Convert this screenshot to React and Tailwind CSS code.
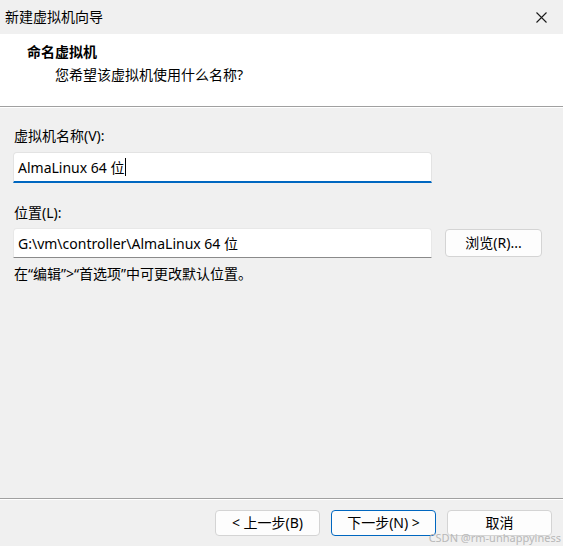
import React from 'react';

const FONT = { fontFamily: '"Noto Sans", "Noto Sans CJK SC", sans-serif' };

function CloseIcon() {
  return (
    <svg width="11" height="11" viewBox="0 0 11 11" fill="none">
      <path d="M0.5 0.5L10.5 10.5M10.5 0.5L0.5 10.5" stroke="#1a1a1a" strokeWidth="1.1" />
    </svg>
  );
}

function WizardButton({ children, primary }) {
  return (
    <button
      type="button"
      className={`h-[26px] w-[105px] rounded-[4px] border bg-[#fdfdfd] text-[14px] leading-none text-black ${
        primary ? 'border-[#0067c0]' : 'border-[#d4d4d4]'
      }`}
    >
      {children}
    </button>
  );
}

export default function App() {
  return (
    <div className="relative flex h-[546px] w-[563px] flex-col overflow-hidden bg-[#f0f0f0] text-black" style={FONT}>
      <div className="flex h-[34px] shrink-0 items-center justify-between pl-[5px] pr-[16px]">
        <span className="text-[14px] leading-none">新建虚拟机向导</span>
        <CloseIcon />
      </div>

      <div className="h-[72px] shrink-0 bg-white pt-[8px]">
        <p className="pl-[27px] text-[14px] font-bold leading-[20px]">命名虚拟机</p>
        <p className="mt-[3px] pl-[55px] text-[14px] leading-[20px]">您希望该虚拟机使用什么名称?</p>
      </div>
      <div className="h-px shrink-0 bg-[#a0a0a0]" />
      <div className="h-px shrink-0 bg-white" />

      <div className="flex flex-1 flex-col px-[13px] pt-[18px]">
        <label className="pl-px text-[14px] leading-[20px]">虚拟机名称(V):</label>
        <div className="mt-[6px] flex h-[31px] w-[419px] items-center rounded-t-[4px] border-x border-t border-b-2 border-[#e3e3e3] border-b-[#0067c0] bg-white pl-[4px] text-[14px]">
          <span>AlmaLinux 64 位</span>
          <span className="ml-px h-[18px] w-px bg-black" />
        </div>

        <label className="mt-[20px] pl-px text-[14px] leading-[20px]">位置(L):</label>
        <div className="mt-[5px] flex items-center gap-[13px]">
          <div className="flex h-[30px] w-[419px] items-center rounded-t-[4px] border-x border-t border-[#e8e8e8] border-b border-b-[#8a8a8a] bg-white pl-[4px] text-[14px]">
            G:\vm\controller\AlmaLinux 64 位
          </div>
          <button
            type="button"
            className="h-[28px] w-[97px] rounded-[4px] border border-[#d4d4d4] bg-[#fdfdfd] text-[14px] leading-none"
          >
            浏览(R)...
          </button>
        </div>

        <p className="mt-[6px] pl-px text-[14px] leading-[20px]">在“编辑”&gt;“首选项”中可更改默认位置。</p>
      </div>

      <div className="h-px shrink-0 bg-[#a0a0a0]" />
      <div className="h-px shrink-0 bg-white" />
      <div className="flex h-[46px] shrink-0 items-start justify-end gap-[11px] pr-[11px] pt-[10px]">
        <WizardButton>&lt; 上一步(B)</WizardButton>
        <WizardButton primary>下一步(N) &gt;</WizardButton>
        <WizardButton>取消</WizardButton>
      </div>

      <span className="absolute bottom-[3px] right-[2px] text-[11px] leading-none text-[#b8b8b8]">CSDN @rm-unhappyiness</span>
    </div>
  );
}
